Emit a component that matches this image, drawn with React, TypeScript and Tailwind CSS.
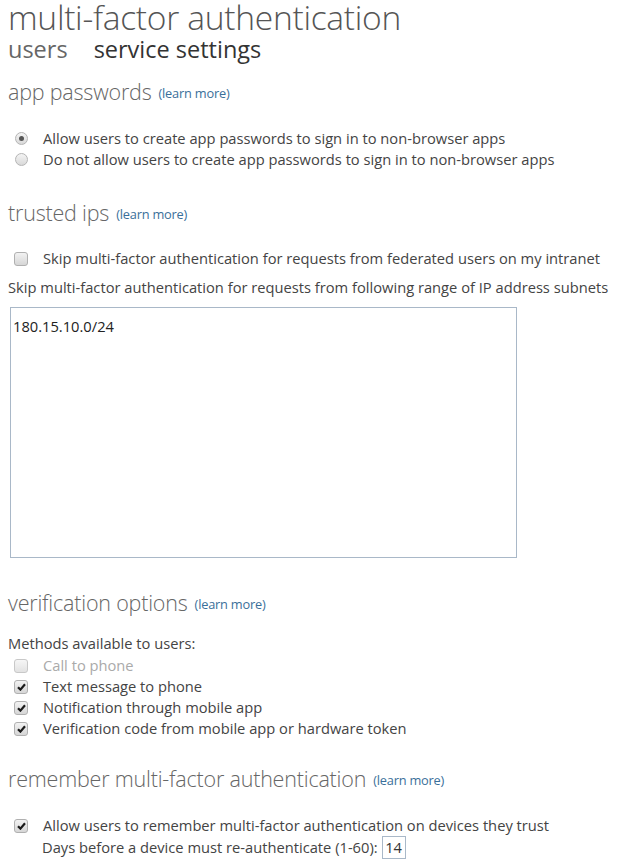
import React from "react";

const FONT = { fontFamily: '"Open Sans", "Noto Sans", sans-serif' };

function LearnMore() {
  return <span className="ml-[7px] text-[12.8px] font-normal text-[#3a6f9a] align-[2px]">(learn more)</span>;
}

function Heading({ children, className = "" }: { children: React.ReactNode; className?: string }) {
  return (
    <div className={`text-[21.5px] font-light leading-[26px] text-[#666] tracking-[-0.2px] ${className}`}>
      {children}
      <LearnMore />
    </div>
  );
}

function Radio({ checked }: { checked?: boolean }) {
  return (
    <span className="w-[13px] h-[13px] rounded-full border border-[#b5b5b5] bg-gradient-to-b from-[#f4f4f4] to-[#d9d9d9] flex items-center justify-center shrink-0">
      {checked && <span className="w-[5px] h-[5px] rounded-full bg-[#555]" />}
    </span>
  );
}

function Check({ checked, faded }: { checked?: boolean; faded?: boolean }) {
  return (
    <span
      className={`w-[14px] h-[14px] rounded-[3px] border flex items-center justify-center shrink-0 bg-gradient-to-b ${
        faded ? "border-[#c8c8c8] from-[#f6f6f6] to-[#e2e2e2]" : "border-[#b0b0b0] from-[#f2f2f2] to-[#d6d6d6]"
      }`}
    >
      {checked && (
        <svg width="9" height="8" viewBox="0 0 9 8">
          <path d="M1 4.2 L3.4 6.6 L8 1.2" fill="none" stroke="#1a1a1a" strokeWidth="2.2" />
        </svg>
      )}
    </span>
  );
}

function Row({ children, control, className = "" }: { children: React.ReactNode; control: React.ReactNode; className?: string }) {
  return (
    <div className={`flex items-center h-[21px] pl-[6px] ${className}`}>
      {control}
      <span className="ml-[15px]">{children}</span>
    </div>
  );
}

export default function App() {
  return (
    <div className="w-[619px] h-[865px] bg-white overflow-hidden pl-[8px] text-[14.7px] text-[#444]" style={FONT}>
      <div className="text-[33.6px] font-light leading-[32px] pt-[1px] text-[#555] tracking-[-0.3px]">multi-factor authentication</div>
      <div className="flex items-baseline gap-[26px] text-[23.5px] leading-[26px] mt-[3px]">
        <span className="text-[#666]">users</span>
        <span className="text-[#333]">service settings</span>
      </div>

      <Heading className="mt-[17px]">app passwords</Heading>
      <div className="mt-[22px]">
        <Row control={<Radio checked />} className="pl-[7px]">Allow users to create app passwords to sign in to non-browser apps</Row>
        <Row control={<Radio />} className="pl-[7px]">Do not allow users to create app passwords to sign in to non-browser apps</Row>
      </div>

      <Heading className="mt-[30px]">trusted ips</Heading>
      <Row control={<Check />} className="mt-[21px]">
        Skip multi-factor authentication for requests from federated users on my intranet
      </Row>
      <div className="mt-[8px] h-[21px] leading-[21px]">Skip multi-factor authentication for requests from following range of IP address subnets</div>
      <div className="mt-[9px] ml-[2px] w-[507px] h-[251px] border border-[#a9b8c8] px-[2px] pt-[8px] text-[#222] leading-[21px]">
        180.15.10.0/24
      </div>

      <Heading className="mt-[32px]">verification options</Heading>
      <div className="mt-[16px] h-[21px] leading-[21px]">Methods available to users:</div>
      <div className="mt-[1px]">
        <Row control={<Check faded />} className="text-[#aaa]">Call to phone</Row>
        <Row control={<Check checked />} className="h-[21.5px]">Text message to phone</Row>
        <Row control={<Check checked />} className="h-[21.5px]">Notification through mobile app</Row>
        <Row control={<Check checked />} className="h-[21.5px]">Verification code from mobile app or hardware token</Row>
      </div>

      <Heading className="mt-[27px]">remember multi-factor authentication</Heading>
      <Row control={<Check checked />} className="mt-[22px]">
        Allow users to remember multi-factor authentication on devices they trust
      </Row>
      <div className="flex items-center h-[22px] pl-[34px]">
        Days before a device must re-authenticate (1-60):
        <span className="ml-[4px] w-[24px] h-[23px] border border-[#a9b8c8] flex items-center justify-center text-[#333]">14</span>
      </div>
    </div>
  );
}
